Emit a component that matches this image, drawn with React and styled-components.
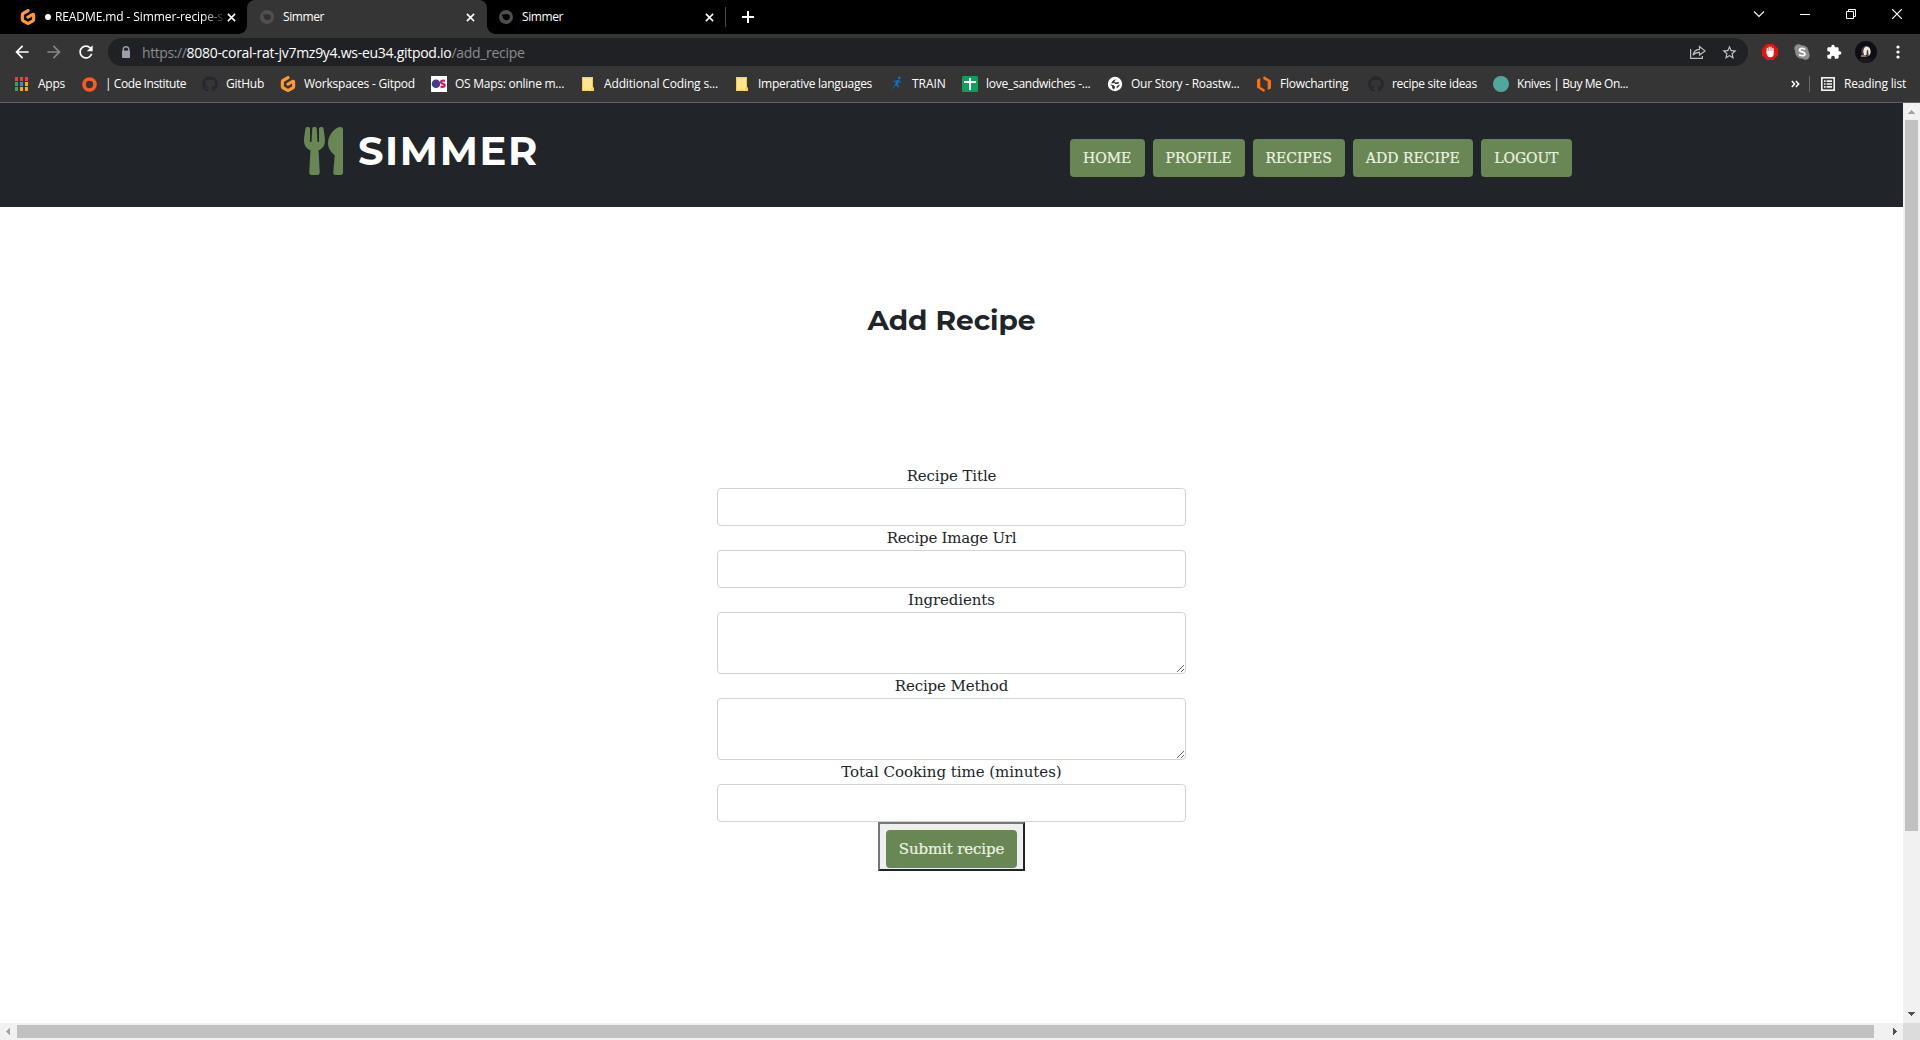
import React from "react";
import styled, { createGlobalStyle } from "styled-components";
import { FaUtensils, FaGithub } from "react-icons/fa";
import { SiGitpod } from "react-icons/si";
import { MdArrowBack, MdArrowForward, MdRefresh, MdStarBorder, MdExtension } from "react-icons/md";

const ui = `"Segoe UI", "Open Sans", "Noto Sans", sans-serif`;
const display = `Montserrat, Inter, sans-serif`;
const slab = `"Roboto Slab", "DejaVu Serif", serif`;
const slabCaps = `"Roboto Slab", "DejaVu Serif Condensed", "DejaVu Serif", serif`;

const GlobalStyle = createGlobalStyle`
  *, *::before, *::after { box-sizing: border-box; }
  body { margin: 0; background: #fff; overflow: hidden; }
  svg { display: block; flex: none; }
`;

const Browser = styled.div`
  display: flex;
  flex-direction: column;
  width: 1920px;
  height: 1040px;
  overflow: hidden;
  font-family: ${ui};
  font-size: 12px;
  color: #fff;
`;

/* ---------- tab strip ---------- */

const TabStrip = styled.div`
  display: flex;
  flex: none;
  height: 34px;
  background: #000;
`;

const Tab = styled.div`
  position: relative;
  display: flex;
  align-items: center;
  width: ${(p) => p.$width}px;
  padding: 0 ${(p) => p.$padRight}px 0 ${(p) => p.$padLeft}px;
  border-radius: 8px 8px 0 0;
  background: ${(p) => (p.$active ? "#353535" : "transparent")};

  &::before,
  &::after {
    content: "";
    display: ${(p) => (p.$active ? "block" : "none")};
    position: absolute;
    bottom: 0;
    width: 8px;
    height: 8px;
  }
  &::before {
    left: -8px;
    background: radial-gradient(circle at 0 0, transparent 7.5px, #353535 8px);
  }
  &::after {
    right: -8px;
    background: radial-gradient(circle at 100% 0, transparent 7.5px, #353535 8px);
  }
`;

const TabTitle = styled.span`
  flex: 1;
  margin-left: ${(p) => p.$gap}px;
  overflow: hidden;
  white-space: pre;
  line-height: 18px;
  letter-spacing: ${(p) => p.$track || 0}px;
  ${(p) => p.$fade && "-webkit-mask-image: linear-gradient(90deg, #000 86%, transparent 100%);"}
`;

const Dot = styled.span`
  flex: none;
  width: 6px;
  height: 6px;
  margin-left: 9px;
  border-radius: 50%;
  background: #fff;
`;

const TabDivider = styled.span`
  width: 1px;
  height: 20px;
  margin: 7px 16px 0 0;
  background: #4a4a4a;
`;

const NewTab = styled.div`
  display: flex;
  align-items: center;
`;

const WindowControls = styled.div`
  display: flex;
  margin-left: auto;
  height: 28px;
`;

const WindowButton = styled.span`
  display: flex;
  align-items: center;
  justify-content: center;
  width: 46px;
`;

/* ---------- toolbar ---------- */

const Toolbar = styled.div`
  display: flex;
  flex: none;
  align-items: center;
  height: 36px;
  padding: 0 15px 0 12px;
  background: #353535;
`;

const NavIcons = styled.div`
  display: flex;
  gap: 12px;
  width: 96px;
`;

const AddressBar = styled.div`
  display: flex;
  align-items: center;
  width: 1640px;
  height: 28px;
  padding: 0 10px 0 13px;
  border-radius: 14px;
  background: #202124;
  font-size: 14px;
`;

const Url = styled.span`
  display: flex;
  flex: 1;
  margin-left: 11px;
  color: #8b8c8e;
  white-space: pre;
`;

const UrlPart = styled.span`
  letter-spacing: ${(p) => p.$track}px;
  color: ${(p) => (p.$host ? "#fff" : "inherit")};
`;

const AddressActions = styled.div`
  display: flex;
  align-items: center;
  gap: 15px;
`;

const Extensions = styled.div`
  display: flex;
  align-items: center;
  gap: 16px;
  margin: 0 19px 0 14px;
`;

const Avatar = styled.span`
  display: flex;
  width: 22px;
  height: 22px;
  margin-left: -3px;
  border-radius: 50%;
  overflow: hidden;
`;

/* ---------- bookmarks ---------- */

const BookmarkBar = styled.div`
  display: flex;
  flex: none;
  align-items: center;
  height: 33px;
  padding: 0 14px 5px;
  border-bottom: 1px solid #606060;
  background: #353535;
`;

const Bookmark = styled.div`
  display: flex;
  align-items: center;
  gap: 8px;
  width: ${(p) => p.$width}px;
  white-space: nowrap;
  letter-spacing: ${(p) => p.$track}px;
`;

const BookmarkEnd = styled.div`
  display: flex;
  align-items: center;
  margin-left: auto;
`;

const EndDivider = styled.span`
  width: 1px;
  height: 16px;
  margin: 0 11px 0 9px;
  background: #6a6a6a;
`;

const ReadingList = styled.span`
  margin-left: 9px;
  letter-spacing: -0.19px;
`;

/* ---------- page ---------- */

const Viewport = styled.div`
  display: grid;
  flex: 1;
  grid-template-columns: 1903px 17px;
  grid-template-rows: 920px 17px;
`;

const Page = styled.main`
  background: #fff;
  color: #212529;
  overflow: hidden;
`;

const Header = styled.header`
  display: flex;
  justify-content: space-between;
  height: 104px;
  padding: 24px 331px 0 304px;
  background: #212529;
`;

const Brand = styled.div`
  display: flex;
  gap: 15px;
  height: 48px;
  color: #698655;
`;

const BrandIcon = styled(FaUtensils)`
  width: 39px;
  height: 48px;
`;

const BrandName = styled.span`
  font: 700 40px/48px ${display};
  letter-spacing: 1.6px;
  color: #fff;
`;

const Menu = styled.nav`
  display: flex;
  gap: 8px;
  margin-top: 12px;
`;

const green = `
  display: flex;
  align-items: center;
  justify-content: center;
  height: 38px;
  border-radius: 4px;
  background: #698655;
  color: #edf3e2;
  -webkit-text-stroke: 0.2px #edf3e2;
`;

const MenuLink = styled.a`
  ${green}
  width: ${(p) => p.$width}px;
  font: 15.6px/24px ${slabCaps};
  letter-spacing: ${(p) => p.$track}px;
`;

const Title = styled.h1`
  margin: 95px 0 0;
  text-align: center;
  font: 700 28px/36px ${display};
`;

const Form = styled.form`
  display: flex;
  flex-direction: column;
  align-items: center;
  width: 469px;
  margin: 126px auto 0;
`;

const Label = styled.label`
  font: 15px/24px ${slab};
  letter-spacing: ${(p) => p.$track}px;
`;

const Input = styled.input`
  display: block;
  width: 100%;
  height: 38px;
  border: 1px solid #ced4da;
  border-radius: 4px;
  background: #fff;
`;

const TextArea = styled.textarea`
  display: block;
  width: 100%;
  height: 62px;
  margin: 0;
  border: 1px solid #ced4da;
  border-radius: 4px;
  background: #fff;
`;

const Submit = styled.button`
  width: 147px;
  height: 49px;
  padding: 6px 6px 1px;
  border: 2px solid;
  border-color: #767676 #212529 #212529 #767676;
  border-radius: 0;
  background: #efefef;
`;

const SubmitLabel = styled.span`
  ${green}
  font: 15px/24px ${slab};
  letter-spacing: -0.13px;
`;

/* ---------- scrollbars ---------- */

const VScroll = styled.div`
  display: flex;
  flex-direction: column;
  align-items: center;
  justify-content: space-between;
  background: #f1f1f1;
`;

const HScroll = styled.div`
  display: flex;
  align-items: center;
  justify-content: space-between;
  background: #f1f1f1;
`;

const VThumb = styled.span`
  width: 13px;
  height: 711px;
  margin-bottom: auto;
  background: #c1c1c1;
`;

const HThumb = styled.span`
  width: 1857px;
  height: 13px;
  margin-right: auto;
  background: #c1c1c1;
`;

const Corner = styled.div`
  background: #dcdcdc;
`;

const Arrow = ({ d, fill }) => (
  <svg width="17" height="17" viewBox="0 0 17 17" shapeRendering="crispEdges"><path d={d} fill={fill} /></svg>
);

/* ---------- icons ---------- */

const GitpodMark = () => <SiGitpod size={16} color="#ff9a33" />;

const SimmerFavicon = ({ dark }) => (
  <svg width="14" height="14" viewBox="0 0 14 14">
    <circle cx="7" cy="7" r="7" fill={dark ? "#4d4d4d" : "#505050"} />
    <path d="M2.800 4.200 4.800 4.700C6 3.600 7.800 4.600 8.700 4.300c1.600.3 2.400 1.500 2.200 3-.3 1.800-1.800 2.900-3.500 2.900C5.400 10.200 3.900 9 3.700 7z" fill={dark ? "#000" : "#313131"} />
  </svg>
);

const Close = () => (
  <svg width="9" height="9" viewBox="0 0 9 9"><path d="M.9.9l7.200 7.200M8.100.9.9 8.100" stroke="#fff" strokeWidth="1.600" /></svg>
);

const AppsIcon = () => {
  const colors = ["#ea4335", "#ea4335", "#ea4335", "#34a853", "#2b8cff", "#fbab05", "#34a853", "#fbab05", "#fbab05"];
  return (
    <svg width="16" height="16" viewBox="0 0 16 16" shapeRendering="crispEdges">
      {colors.map((c, i) => <rect key={i} x={1 + (i % 3) * 5} y={1 + Math.floor(i / 3) * 5} width="3" height="4" fill={c} />)}
    </svg>
  );
};

const RingIcon = () => (
  <svg width="16" height="16" viewBox="0 0 16 16"><circle cx="8.500" cy="8.500" r="5.500" fill="none" stroke="#fb5a22" strokeWidth="3.600" /></svg>
);

const OctocatIcon = () => <FaGithub size={16} color="#24292e" />;

const OsIcon = () => (
  <svg width="16" height="16" viewBox="0 0 16 16">
    <path fill="#fff" d="M0 0h16v16H0z" />
    <circle cx="5" cy="7.700" r="4.300" fill="#453c90" />
    <path d="M14 4.900c-3.500-1.200-5 .9-3.200 2.300l2 .9c2 1.300.5 3.700-3.300 2.400" fill="none" stroke="#d3155a" strokeWidth="2.200" />
  </svg>
);

const NoteIcon = () => (
  <svg width="16" height="16" viewBox="0 0 16 16">
    <path d="M2 1h11v10.500l1 .5v3H2z" fill="#ffe58b" />
    <path d="M2.500 1.500h10v10M2.500 1.500v13H10" fill="none" stroke="#f0cc58" />
    <path d="M11 11.500h3V15h-3z" fill="#f7d25d" />
  </svg>
);

const RunnerIcon = () => (
  <svg width="16" height="16" viewBox="0 0 16 16">
    <circle cx="11.300" cy="1.900" r="1.300" fill="#0a6fd0" />
    <path d="M4.500 5.200 8.500 4.300 12 3.800 9.700 8.300 11 9.500 9.700 13.200 9.400 10 7.600 9.300 3 15.300 6.800 9l1-3.500-3.300.4zM11 5.200l2 1.200-.4.8-2-1z" fill="#0a6fd0" />
  </svg>
);

const SheetIcon = () => (
  <svg width="16" height="16" viewBox="0 0 16 16">
    <rect width="16" height="16" rx="1.500" fill="#129f5a" />
    <path d="M2 6h12M8 2v12" stroke="#fff" strokeWidth="2" />
  </svg>
);

const GlobeIcon = () => (
  <svg width="16" height="16" viewBox="0 0 16 16">
    <circle cx="8" cy="8" r="7.200" fill="#fff" />
    <path d="M4.300 7.600C4.500 5 7 3.200 9.200 3.400L7.300 5.300l1.200 1.200 3.800-.4-1 2H8.200l-.7-1zM2.600 8.600l4.200.7 1.400 1.800-1.200 2.300-1.900-1.500v-1.700zM13.200 8.300l-1.700 2.800-2.100 1.300.5-2.400z" fill="#353535" />
  </svg>
);

const HexIcon = () => (
  <svg width="16" height="16" viewBox="0 0 16 16" fill="#fd6f14">
    <path d="M1 3.500 4.300 2v9L8.800 13.500 8.300 16.200 1 11.500z" />
    <path d="M15 12.500 11.700 14V5.500L7.200 3 7.700 0 15 4.500z" />
  </svg>
);

const TealDot = () => (
  <svg width="16" height="16" viewBox="0 0 16 16"><circle cx="8" cy="8" r="8" fill="#52a79c" /></svg>
);

const LockIcon = () => (
  <svg width="10" height="13" viewBox="0 0 10 13">
    <path d="M2.200 6V3.600a2.800 2.800 0 0 1 5.600 0V6" fill="none" stroke="#9aa0a6" strokeWidth="1.400" />
    <rect x="1" y="4.500" width="8" height="7.500" rx=".8" fill="#9aa0a6" />
  </svg>
);

const ShareIcon = () => (
  <svg width="16" height="14" viewBox="0 0 16 14" fill="none" stroke="#bdbdbd" strokeWidth="1.200">
    <path d="M.6 4v9.400h11.800V11" />
    <path d="M3 10.200C3.600 6.700 6 4.500 9.500 4.300V1.500L15 5.900 9.500 10V7.400C6.500 7.300 4.500 8.300 3 10.200z" />
  </svg>
);

const BlockIcon = () => (
  <svg width="16" height="16" viewBox="0 0 16 16">
    <path d="M4.700 0h6.600L16 4.700v6.600L11.300 16H4.700L0 11.300V4.700z" fill="#e8120e" />
    <path d="M5.300 8.500V4.400M7.200 7.500V3.200M9 7.500V3.200M10.900 8V4.500" stroke="#fff" strokeWidth="1.400" strokeLinecap="round" />
    <path d="M4.600 7h7v3.200c0 1.600-1 3-2.600 3H7.600C6 13.200 5.300 12 4.600 10z" fill="#fff" />
  </svg>
);

const SkypeIcon = () => (
  <svg width="16" height="16" viewBox="0 0 16 16">
    <circle cx="8" cy="8" r="6.800" fill="#8d8d8d" /><circle cx="4.500" cy="4.500" r="4.200" fill="#8d8d8d" /><circle cx="11.500" cy="11.500" r="4.200" fill="#8d8d8d" />
    <path d="M10.800 5.600C10.200 4 5.500 3.800 5.500 6.100c0 2.400 5.400 1.300 5.400 3.800 0 2.400-5 2.300-5.700.3" fill="none" stroke="#fff" strokeWidth="1.800" />
  </svg>
);

const AvatarPicture = () => (
  <svg width="22" height="22" viewBox="0 0 22 22">
    <path fill="#0e0e14" d="M0 0h22v22H0z" />
    <ellipse cx="11" cy="10.500" rx="4.800" ry="5.800" fill="#4a3d38" />
    <path d="M8.500 12c-.5-3 .5-6 3-6.500 2.500-.2 4 2 4 5 0 2-.5 3.500-1.800 4.300l-.5-5.300-1.200-1-.6 5.500-2 .8z" fill="#f2ede8" />
    <path d="M6 14h5v2H6z" fill="#8a7768" />
    <path d="M5 17h11v5H5z" fill="#1d1a1c" />
  </svg>
);

const Kebab = () => (
  <svg width="4" height="14" viewBox="0 0 4 14" fill="#fff"><circle cx="2" cy="2" r="1.600" /><circle cx="2" cy="7" r="1.600" /><circle cx="2" cy="12" r="1.600" /></svg>
);

const ReadingIcon = () => (
  <svg width="14" height="14" viewBox="0 0 14 14">
    <rect x=".8" y=".8" width="12.400" height="12.400" fill="none" stroke="#f1f3f4" strokeWidth="1.600" />
    <path d="M3 4.200h1.600M3 7h1.600M3 9.800h1.600M5.600 4.200H11M5.600 7H11M5.600 9.800H11" stroke="#f1f3f4" strokeWidth="1.700" />
  </svg>
);

const Chevrons = () => (
  <svg width="9" height="8" viewBox="0 0 9 8"><path d="M.8 1 3.600 4 .8 7M4.900 1l2.800 3-2.800 3" fill="none" stroke="#fff" strokeWidth="1.500" /></svg>
);

/* ---------- data ---------- */

const bookmarks = [
  ["Apps", 67, -0.25, AppsIcon],
  ["| Code Institute", 121, -0.44, RingIcon],
  ["GitHub", 78, -0.27, OctocatIcon],
  ["Workspaces - Gitpod", 151, -0.24, GitpodMark],
  ["OS Maps: online m...", 149, -0.26, OsIcon],
  ["Additional Coding s...", 154, -0.15, NoteIcon],
  ["Imperative languages", 154, -0.29, NoteIcon],
  ["TRAIN", 74, -0.05, RunnerIcon],
  ["love_sandwiches -...", 145, -0.26, SheetIcon],
  ["Our Story - Roastw...", 149, -0.26, GlobeIcon],
  ["Flowcharting", 112, -0.27, HexIcon],
  ["recipe site ideas", 125, -0.3, OctocatIcon],
  ["Knives | Buy Me On...", 151, -0.43, TealDot],
];

const menu = [
  ["HOME", 74.9, 0],
  ["PROFILE", 92, -0.05],
  ["RECIPES", 92.3, 0],
  ["ADD RECIPE", 119.9, 0],
  ["LOGOUT", 91.3, -0.12],
];

const fields = [
  ["Recipe Title", Input, -0.12],
  ["Recipe Image Url", Input, -0.25],
  ["Ingredients", TextArea, -0.1],
  ["Recipe Method", TextArea, -0.13],
  ["Total Cooking time (minutes)", Input, -0.03],
];

export default function App() {
  return (
    <Browser>
      <GlobalStyle />
      <TabStrip>
        <Tab $width={247} $padLeft={20} $padRight={11}>
          <GitpodMark />
          <Dot />
          <TabTitle $gap={4} $track={-0.1} $fade>README.md - Simmer-recipe-s</TabTitle>
          <Close />
        </Tab>
        <Tab $active $width={240} $padLeft={13} $padRight={12}>
          <SimmerFavicon />
          <TabTitle $gap={9} $track={-0.41}>Simmer</TabTitle>
          <Close />
        </Tab>
        <Tab $width={238} $padLeft={12} $padRight={11}>
          <SimmerFavicon dark />
          <TabTitle $gap={9} $track={-0.41}>Simmer</TabTitle>
          <Close />
        </Tab>
        <TabDivider />
        <NewTab>
          <svg width="12" height="12" viewBox="0 0 12 12"><path d="M6 0v12M0 6h12" stroke="#fff" strokeWidth="2" /></svg>
        </NewTab>
        <WindowControls>
          <WindowButton><svg width="12" height="8" viewBox="0 0 12 8"><path d="m1 1.500 5 5 5-5" fill="none" stroke="#fff" strokeWidth="1.100" /></svg></WindowButton>
          <WindowButton><svg width="10" height="10" viewBox="0 0 10 10"><path d="M0 5.500h10" stroke="#fff" /></svg></WindowButton>
          <WindowButton><svg width="10" height="10" viewBox="0 0 10 10" fill="none" stroke="#fff"><path d="M.5 2.500h7v7h-7zM2.500 2.500v-2h7v7h-2" /></svg></WindowButton>
          <WindowButton><svg width="10" height="10" viewBox="0 0 10 10"><path d="m0 0 10 10M10 0 0 10" stroke="#fff" strokeWidth="1.200" /></svg></WindowButton>
        </WindowControls>
      </TabStrip>

      <Toolbar>
        <NavIcons>
          <MdArrowBack size={20} color="#fff" />
          <MdArrowForward size={20} color="#868686" />
          <MdRefresh size={20} color="#fff" />
        </NavIcons>
        <AddressBar>
          <LockIcon />
          <Url>
            <UrlPart $track={-0.41}>https://</UrlPart>
            <UrlPart $track={-0.28} $host>8080-coral-rat-jv7mz9y4.ws-eu34.gitpod.io</UrlPart>
            <UrlPart $track={-0.31}>/add_recipe</UrlPart>
          </Url>
          <AddressActions>
            <ShareIcon />
            <MdStarBorder size={17} color="#c4c4c4" />
          </AddressActions>
        </AddressBar>
        <Extensions>
          <BlockIcon />
          <SkypeIcon />
          <MdExtension size={16} color="#fff" />
          <Avatar><AvatarPicture /></Avatar>
        </Extensions>
        <Kebab />
      </Toolbar>

      <BookmarkBar>
        {bookmarks.map(([text, width, track, Icon]) => (
          <Bookmark key={text} $width={width} $track={track}><Icon />{text}</Bookmark>
        ))}
        <BookmarkEnd>
          <Chevrons />
          <EndDivider />
          <ReadingIcon />
          <ReadingList>Reading list</ReadingList>
        </BookmarkEnd>
      </BookmarkBar>

      <Viewport>
        <Page>
          <Header>
            <Brand>
              <BrandIcon />
              <BrandName>SIMMER</BrandName>
            </Brand>
            <Menu>
              {menu.map(([text, width, track]) => (
                <MenuLink key={text} $width={width} $track={track}>{text}</MenuLink>
              ))}
            </Menu>
          </Header>
          <Title>Add Recipe</Title>
          <Form>
            {fields.map(([text, Field, track]) => (
              <React.Fragment key={text}>
                <Label $track={track}>{text}</Label>
                <Field />
              </React.Fragment>
            ))}
            <Submit type="button"><SubmitLabel>Submit recipe</SubmitLabel></Submit>
          </Form>
        </Page>
        <VScroll>
          <Arrow d="M8 7h1v1h1v1h1v1h1v1H5v-1h1V9h1V8h1z" fill="#a3a3a3" />
          <VThumb />
          <Arrow d="M5 6h7v1h-1v1h-1v1H9v1H8V9H7V8H6V7H5z" fill="#505050" />
        </VScroll>
        <HScroll>
          <Arrow d="M10 5v7H9v-1H8v-1H7V9H6V8h1V7h1V6h1V5z" fill="#a3a3a3" />
          <HThumb />
          <Arrow d="M7 5v7h1v-1h1v-1h1V9h1V8h-1V7H9V6H8V5z" fill="#505050" />
        </HScroll>
        <Corner />
      </Viewport>
    </Browser>
  );
}
